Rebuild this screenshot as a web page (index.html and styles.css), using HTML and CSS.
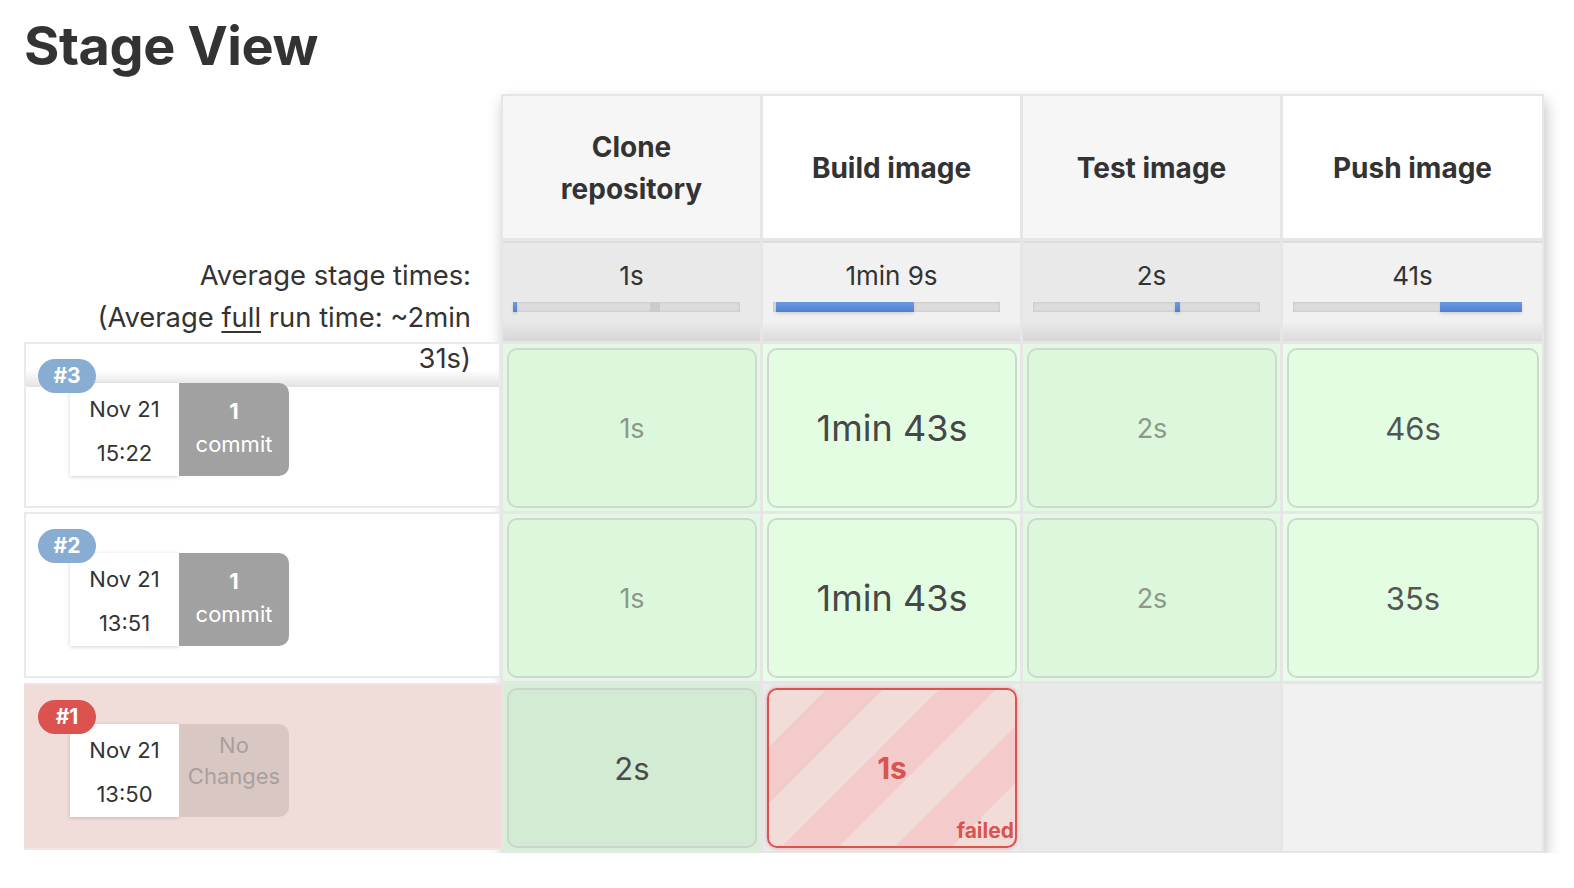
FILE: index.html
```html
<!DOCTYPE html>
<html lang="en">
<head>
<meta charset="utf-8">
<title>Stage View</title>
<link rel="stylesheet" href="styles.css">
</head>
<body>
<h1 class="title">Stage View</h1>
<div class="stage-view">
  <div class="runs">
    <div class="avg-label">Average stage times:<br>(Average <u>full</u> run time: ~2min 31s)</div>
    <div class="run run-first">
      <span class="badge">#3</span>
      <div class="card">
        <div class="date">Nov 21<br>15:22</div>
        <div class="changes"><b>1</b><br>commit</div>
      </div>
    </div>
    <div class="run">
      <span class="badge">#2</span>
      <div class="card">
        <div class="date">Nov 21<br>13:51</div>
        <div class="changes"><b>1</b><br>commit</div>
      </div>
    </div>
    <div class="run run-failed">
      <span class="badge badge-red">#1</span>
      <div class="card">
        <div class="date">Nov 21<br>13:50</div>
        <div class="changes changes-none">No<br>Changes</div>
      </div>
    </div>
  </div>

  <div class="stages">
    <div class="head odd">Clone<br>repository</div>
    <div class="head even">Build image</div>
    <div class="head odd">Test image</div>
    <div class="head even">Push image</div>

    <div class="avg odd"><div class="avg-time">1s</div><div class="track"><span class="fill" style="width:4px"></span><span class="gap" style="width:133px"></span><span class="marker" style="width:10px"></span></div></div>
    <div class="avg even"><div class="avg-time">1min 9s</div><div class="track"><span class="gap" style="width:3px"></span><span class="fill" style="width:138px"></span></div></div>
    <div class="avg odd"><div class="avg-time">2s</div><div class="track"><span class="gap" style="width:142px"></span><span class="fill" style="width:5px"></span></div></div>
    <div class="avg even"><div class="avg-time">41s</div><div class="track"><span class="gap" style="width:147px"></span><span class="fill" style="width:82px"></span></div></div>

    <div class="cell ok odd"><div class="box dim">1s</div></div>
    <div class="cell ok even"><div class="box big">1min 43s</div></div>
    <div class="cell ok odd"><div class="box dim">2s</div></div>
    <div class="cell ok even"><div class="box mid">46s</div></div>

    <div class="cell ok odd"><div class="box dim">1s</div></div>
    <div class="cell ok even"><div class="box big">1min 43s</div></div>
    <div class="cell ok odd"><div class="box dim">2s</div></div>
    <div class="cell ok even"><div class="box mid">35s</div></div>

    <div class="cell ok-dark"><div class="box mid dark">2s</div></div>
    <div class="cell fail-cell"><div class="box failed"><span class="fail-time">1s</span><span class="fail-label">failed</span></div></div>
    <div class="cell empty odd"></div>
    <div class="cell empty even"></div>
  </div>
</div>
</body>
</html>
```

FILE: styles.css
```css
html, body {
  margin: 0;
  padding: 0;
  background: #ffffff;
}

body {
  font-family: Inter, "Noto Sans", "Liberation Sans", sans-serif;
  color: #333333;
}

.title {
  margin: 0;
  padding: 16px 0 0 24px;
  height: 78px;
  box-sizing: border-box;
  font-size: 54px;
  line-height: 60px;
  font-weight: 700;
  letter-spacing: -0.4px;
  color: #333333;
}

.stage-view {
  display: flex;
  align-items: flex-start;
  padding: 16px 0 0 24px;
}

/* ---------- left column ---------- */
.runs {
  width: 477px;
  padding-top: 146px;
  flex: none;
}

.avg-label {
  position: relative;
  z-index: 2;
  height: 102px;
  box-sizing: border-box;
  padding: 15px 30px 0 40px;
  text-align: right;
  font-size: 27.4px;
  line-height: 41.5px;
  color: #333333;
}

.avg-label u {
  text-decoration-thickness: 2px;
  text-underline-offset: 4px;
}

.run {
  position: relative;
  height: 166px;
  box-sizing: border-box;
  border: 2px solid #eaeaea;
  margin-top: 4px;
  background: #ffffff;
}

.run-first {
  margin-top: 0;
  background: linear-gradient(#ffffff 0, #ffffff 26px, #e2e2e2 43px, #ffffff 43px);
}

.run-failed {
  margin-top: 5px;
  height: 167px;
  background: #f0ddd9;
  border-color: #ece6e5 #f0ddd9 #f3e6e3 #f0ddd9;
}

.badge {
  position: absolute;
  z-index: 3;
  left: 12px;
  top: 15px;
  width: 58px;
  height: 34px;
  border-radius: 17px;
  background: #89acd3;
  color: #ffffff;
  font-weight: 700;
  font-size: 21px;
  line-height: 34px;
  text-align: center;
}

.badge-red {
  background: #db524f;
}

.card {
  display: flex;
  margin: 39px 0 0 44px;
  position: relative;
  z-index: 1;
}

.date {
  width: 109px;
  height: 93px;
  box-sizing: border-box;
  padding-top: 4px;
  background: #ffffff;
  box-shadow: 0 1px 4px rgba(0, 0, 0, 0.18);
  text-align: center;
  font-size: 22px;
  line-height: 44px;
  color: #333333;
}

.changes {
  width: 110px;
  height: 93px;
  box-sizing: border-box;
  padding-top: 12px;
  background: #a1a1a1;
  border-radius: 0 10px 10px 0;
  color: #ffffff;
  text-align: center;
  font-size: 22px;
  line-height: 33px;
}

.changes b {
  font-weight: 700;
}

.changes-none {
  background: #d9c7c3;
  color: #aa9f9d;
  padding-top: 6px;
  line-height: 31px;
}

/* ---------- stage table ---------- */
.stages {
  display: grid;
  width: 1043px;
  box-sizing: border-box;
  grid-template-columns: repeat(4, 1fr);
  grid-template-rows: 142px 100px 167px 167px 167px;
  gap: 3px;
  padding: 2px;
  background: #e6e6e6;
  box-shadow: 2px 7px 14px rgba(0, 0, 0, 0.24);
  flex: none;
}

.head {
  display: flex;
  align-items: center;
  justify-content: center;
  text-align: center;
  font-weight: 700;
  font-size: 28px;
  line-height: 42px;
  color: #333333;
  padding-top: 2px;
}

.head.odd { background: #f6f6f6; }
.head.even { background: #ffffff; }

.avg {
  padding: 16px 20px 0 10px;
  box-sizing: border-box;
  border-top: 2px solid #dedede;
}

.avg.odd {
  background: linear-gradient(#e9e9e9 0, #e9e9e9 78px, #d6d6d6 100%);
}

.avg.even {
  background: linear-gradient(#f1f1f1 0, #f1f1f1 78px, #dbdbdb 100%);
}

.avg-time {
  text-align: center;
  font-size: 26px;
  line-height: 34px;
  color: #333333;
  padding-left: 10px;
}

.track {
  display: flex;
  margin-top: 9px;
  height: 10px;
  background: #dcdcdc;
  box-shadow: inset 0 0 3px rgba(0, 0, 0, 0.14);
}

.track .gap { display: block; flex: none; }

.track .fill {
  display: block;
  flex: none;
  background: linear-gradient(#6c9be0, #4f80cf);
  box-shadow: 0 2px 3px rgba(0, 0, 0, 0.12);
}

.track .marker {
  display: block;
  flex: none;
  background: #cbcbcb;
}

.cell {
  padding: 4px 3px 3px 4px;
  box-sizing: border-box;
}

.cell.ok.odd { background: #e3f8e3; }
.cell.ok.even { background: #e8fde8; }
.cell.ok-dark { background: #d8eed8; }
.cell.fail-cell { background: #ebebeb; }
.cell.empty.odd { background: #e9e9e9; }
.cell.empty.even { background: #f1f1f1; }

.box {
  height: 100%;
  box-sizing: border-box;
  border: 2px solid #cfd8cf;
  border-radius: 10px;
  display: flex;
  align-items: center;
  justify-content: center;
}

.cell.ok.odd .box { background: #ddf7dd; }
.cell.ok.even .box { background: #e3fde3; }
.cell.ok-dark .box { background: #d3ebd3; border-color: #c9d6c9; }

.dim {
  font-size: 27px;
  color: #8b998b;
}

.big {
  font-size: 36px;
  color: #474747;
}

.mid {
  font-size: 31px;
  color: #555555;
}

.dark {
  color: #4a4a4a;
}

.failed {
  display: grid;
  grid-template-columns: 1fr;
  grid-template-rows: 1fr auto 1fr;
  justify-content: stretch;
  justify-items: center;
  align-items: center;
  border-color: #d9534f;
  box-shadow: 0 0 4px rgba(217, 83, 79, 0.45);
  background: repeating-linear-gradient(135deg, #f2dcd8 0, #f2dcd8 40px, #f3cbcb 40px, #f3cbcb 80px);
  color: #d9534f;
  font-weight: 700;
}

.fail-time {
  grid-row: 2;
  font-size: 30px;
  line-height: 36px;
}

.fail-label {
  grid-row: 3;
  justify-self: end;
  align-self: end;
  font-size: 21px;
  line-height: 28px;
  padding: 0 1px 1px 0;
}
```
